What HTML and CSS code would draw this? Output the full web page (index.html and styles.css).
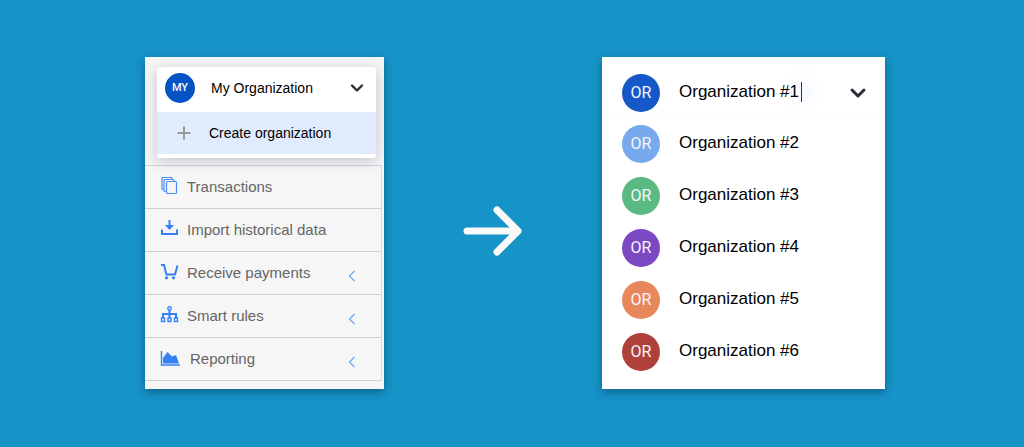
FILE: index.html
```html
<!DOCTYPE html>
<html lang="en">
<head>
<meta charset="utf-8">
<meta name="viewport" content="width=device-width, initial-scale=1">
<title>Organizations</title>
<link rel="stylesheet" href="styles.css">
</head>
<body>
<main class="stage">
  <section class="panel sidebar">
    <div class="switcher">
      <button class="switcher-current" type="button">
        <span class="avatar avatar-small">MY</span>
        <span class="switcher-name">My Organization</span>
        <svg class="chevron" width="14" height="10" viewBox="0 0 14 10"><path d="M2 2.500l5 5 5-5"/></svg>
      </button>
      <button class="switcher-create" type="button">
        <svg class="plus" width="14" height="14" viewBox="0 0 14 14"><path d="M7 0.500v13M0.500 7h13"/></svg>
        <span>Create organization</span>
      </button>
    </div>
    <nav class="menu">
      <a class="menu-item" href="#">
        <svg class="icon" width="20" height="20" viewBox="0 0 20 20"><g class="thin"><rect x="6.500" y="4.500" width="10" height="12" rx="1"/><path d="M6 14.500H5a1 1 0 0 1-1-1V3.500a1 1 0 0 1 1-1h8a1 1 0 0 1 1 1v1"/><path d="M4 12.500H3a1 1 0 0 1-1-1V1.500a1 1 0 0 1 1-1h8a1 1 0 0 1 1 1v1"/></g></svg>
        <span class="menu-label">Transactions</span>
      </a>
      <a class="menu-item" href="#">
        <svg class="icon" width="20" height="20" viewBox="0 0 20 20"><path class="solid" d="M8.500 0h2v5H14l-4.500 5L5 5h3.500zM1 9.500h2v3.500h13v-3.500h2V15H1z"/></svg>
        <span class="menu-label">Import historical data</span>
      </a>
      <a class="menu-item" href="#">
        <svg class="icon" width="20" height="20" viewBox="0 0 20 20"><path class="line" d="M1 2h3l2.500 9.500h8.500l2.500-9"/><circle class="solid" cx="6.500" cy="14.800" r="1.600"/><circle class="solid" cx="13.500" cy="14.800" r="1.600"/></svg>
        <span class="menu-label">Receive payments</span>
        <svg class="back" width="8" height="12" viewBox="0 0 8 12"><path d="M6.500 1L1.500 6l5 5"/></svg>
      </a>
      <a class="menu-item" href="#">
        <svg class="icon" width="20" height="20" viewBox="0 0 20 20"><path class="line" d="M9.500 4v9M3 13V8h13v5"/><g class="node"><circle cx="9.500" cy="2.500" r="1.700"/><rect x="1.500" y="12" width="3" height="3.500"/><rect x="8" y="12" width="3" height="3.500"/><rect x="14.500" y="12" width="3" height="3.500"/></g></svg>
        <span class="menu-label">Smart rules</span>
        <svg class="back" width="8" height="12" viewBox="0 0 8 12"><path d="M6.500 1L1.500 6l5 5"/></svg>
      </a>
      <a class="menu-item" href="#">
        <svg class="icon" width="20" height="20" viewBox="0 0 20 20"><path class="axis" d="M1.500 2v14H20"/><path class="solid" d="M3 14.500V9l4.500-6 4.500 4.500 4-1.500 3 8.500z"/></svg>
        <span class="menu-label menu-label-wide">Reporting</span>
        <svg class="back" width="8" height="12" viewBox="0 0 8 12"><path d="M6.500 1L1.500 6l5 5"/></svg>
      </a>
    </nav>
  </section>

  <svg class="arrow" width="60" height="54" viewBox="0 0 60 54"><path d="M4 27h50"/><path d="M34 6l21 21-21 21"/></svg>

  <section class="panel list">
    <div class="list-head">
      <span class="avatar royal">OR</span>
      <label class="field">
        <input class="field-input" type="text" value="Organization #1" aria-label="Organization">
        <span class="caret"></span>
      </label>
      <svg class="chevron chevron-large" width="18" height="12" viewBox="0 0 18 12"><path d="M3 3l6 6 6-6"/></svg>
    </div>
    <ul class="options">
      <li class="option"><span class="avatar sky">OR</span><span class="option-name">Organization #2</span></li>
      <li class="option"><span class="avatar green">OR</span><span class="option-name">Organization #3</span></li>
      <li class="option"><span class="avatar purple">OR</span><span class="option-name">Organization #4</span></li>
      <li class="option"><span class="avatar orange">OR</span><span class="option-name">Organization #5</span></li>
      <li class="option"><span class="avatar red">OR</span><span class="option-name">Organization #6</span></li>
    </ul>
  </section>
</main>
</body>
</html>
```
FILE: styles.css
```css
* {
  box-sizing: border-box;
}

body {
  margin: 0;
  background: #1693c7;
  font-family: "Liberation Sans", Arial, sans-serif;
  color: #000;
}

.stage {
  display: grid;
  grid-template-columns: 145fr 239fr 218fr 283fr 139fr;
  align-items: start;
  padding: 57px 0;
}

.panel {
  box-shadow: 0 3px 8px rgba(0, 40, 70, 0.45);
}

.sidebar {
  grid-column: 2;
  padding: 10px 2px 8px 0;
  background: #f6f6f7;
  overflow: hidden;
}

.switcher {
  position: relative;
  margin: 0 6px 7px 12px;
  padding-bottom: 4px;
  border-radius: 3px;
  background: #fff;
  box-shadow: 0 3px 14px rgba(40, 40, 80, 0.25);
}

.switcher button {
  display: flex;
  align-items: center;
  width: 100%;
  border: 0;
  background: none;
  color: #000;
  font: 14px/20px "Liberation Sans", Arial, sans-serif;
  text-align: left;
}

.switcher .switcher-current {
  height: 45px;
  padding: 0 12px 4px 8px;
  gap: 16px;
}

.switcher-name {
  flex: 1;
}

.switcher .switcher-create {
  height: 42px;
  padding: 0 20px;
  gap: 18px;
  background: #e0ebfe;
}

.avatar {
  display: grid;
  flex: none;
  place-items: center;
  width: 38px;
  height: 38px;
  border-radius: 50%;
  color: #f5f7fc;
  font: 400 16px/20px Roboto, sans-serif;
}

.avatar-small {
  width: 30px;
  height: 30px;
  background: #0552c4;
  font-size: 11px;
  font-weight: 500;
}

.royal { background: #1758c9; }
.sky { background: #78a9ed; }
.green { background: #5aba82; }
.purple { background: #7c48c2; }
.orange { background: #e8875c; }
.red { background: #b0403a; }

svg {
  display: block;
  flex: none;
  fill: none;
}

.chevron {
  stroke: #2b2b3b;
  stroke-width: 2.4;
  stroke-linecap: round;
  stroke-linejoin: round;
}

.chevron-large {
  margin-left: auto;
  stroke-width: 3;
}

.plus {
  stroke: #999;
  stroke-width: 2;
}

.menu {
  border-top: 1px solid #d2d2d5;
  border-right: 1px solid #dcdcdf;
}

.menu-item {
  display: flex;
  align-items: center;
  height: 43px;
  padding: 0 25px 0 15px;
  border-bottom: 1px solid #d2d2d5;
  color: #656565;
  font-size: 15px;
  line-height: 20px;
  text-decoration: none;
}

.menu-label {
  flex: 1;
  padding-left: 7px;
}

.menu-label-wide {
  padding-left: 10px;
}

.icon .solid {
  fill: #3580f5;
}

.icon .line {
  stroke: #3580f5;
  stroke-width: 2;
}

.icon .axis {
  stroke: #3580f5;
  stroke-width: 1.4;
}

.icon .thin {
  stroke: #4d8ff5;
  stroke-width: 1.2;
}

.icon .node {
  fill: #f6f6f7;
  stroke: #3580f5;
  stroke-width: 1.4;
}

.back {
  margin-top: 6px;
  stroke: #70a5f7;
  stroke-width: 1.2;
}

.arrow {
  grid-column: 3;
  place-self: center;
  margin-top: 16px;
  stroke: #fafafa;
  stroke-width: 7;
  stroke-linecap: round;
  stroke-linejoin: round;
}

.list {
  grid-column: 4;
  padding: 17px 8px 18px 11px;
  background: #fff;
  font-size: 17px;
  line-height: 20px;
}

.list-head {
  display: flex;
  align-items: center;
  gap: 19px;
  padding: 0 10px 4px 9px;
  border-bottom: 3px solid #fcfcfc;
}

.field {
  display: flex;
  align-items: center;
  padding-bottom: 2px;
}

.field-input {
  width: 122px;
  height: 24px;
  padding: 0;
  border: 0;
  background: none;
  color: #000;
  font: inherit;
}

.caret {
  width: 1px;
  height: 20px;
  background: #333;
  box-shadow: 2px 0 14px 5px rgba(80, 140, 240, 0.08);
}

.options {
  display: grid;
  gap: 14px;
  margin: 0;
  padding: 6px 0 0 9px;
  list-style: none;
}

.option {
  display: flex;
  align-items: center;
  gap: 19px;
}

.option-name {
  padding-bottom: 2px;
}
```
